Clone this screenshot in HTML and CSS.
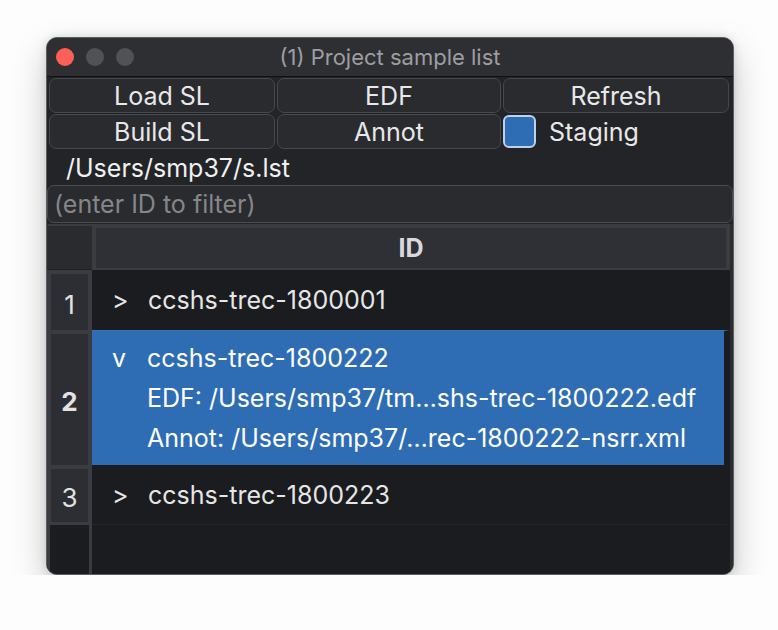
FILE: index.html
```html
<!DOCTYPE html>
<html lang="en">
<head>
  <meta charset="UTF-8">
  <title>(1) Project sample list</title>
  <link rel="stylesheet" href="styles.css">
</head>
<body>

  <div class="window">
    <div class="titlebar">
      <div class="lights">
        <span class="light red"></span>
        <span class="light"></span>
        <span class="light"></span>
      </div>
      <div class="title">(1) Project sample list</div>
    </div>

    <div class="toolbar">
      <button class="btn">Load SL</button>
      <button class="btn">EDF</button>
      <button class="btn">Refresh</button>
      <button class="btn">Build SL</button>
      <button class="btn">Annot</button>
      <label class="check"><span class="box"></span>Staging</label>
    </div>

    <div class="path">/Users/smp37/s.lst</div>
    <input class="filter" type="text" placeholder="(enter ID to filter)">

    <div class="table">
      <div class="thead">
        <div class="corner"></div>
        <div class="colhead"><span>ID</span></div>
      </div>

      <div class="row">
        <div class="num"><span>1</span></div>
        <div class="cell">
          <div class="line"><span class="arrow">&gt;</span>ccshs-trec-1800001</div>
        </div>
      </div>

      <div class="row open">
        <div class="num sel"><span>2</span></div>
        <div class="cell">
          <div class="line"><span class="arrow v">v</span>ccshs-trec-1800222</div>
          <div class="line sub">EDF: /Users/smp37/tm…shs-trec-1800222.edf</div>
          <div class="line sub">Annot: /Users/smp37/…rec-1800222-nsrr.xml</div>
        </div>
      </div>

      <div class="row last">
        <div class="num"><span>3</span></div>
        <div class="cell">
          <div class="line"><span class="arrow">&gt;</span>ccshs-trec-1800223</div>
        </div>
      </div>

      <div class="filler">
        <div class="numfill"></div>
        <div class="cellfill"></div>
      </div>
    </div>
  </div>

</body>
</html>
```

FILE: styles.css
```css
body {
  margin: 0;
  padding: 37px 0 0 46px;
  background-color: #fdfdfd;
  font-family: Inter, "Liberation Sans", sans-serif;
}
.window {
  width: 686px;
  height: 536px;
  border: 1px solid #5d5e62;
  border-radius: 11px;
  background-color: #232427;
  box-shadow: 0 14px 34px rgba(0,0,0,0.22), 0 0 8px rgba(0,0,0,0.12);
  overflow: hidden;
  display: flex;
  flex-direction: column;
}
.titlebar {
  height: 38px;
  flex: none;
  background-color: #2e2f33;
  border-bottom: 1px solid #0f1012;
  display: flex;
  align-items: center;
  position: relative;
}
.lights {
  display: flex;
  gap: 12px;
  padding-left: 9px;
}
.light {
  width: 18px;
  height: 18px;
  border-radius: 50%;
  background-color: #505256;
}
.light.red {
  background-color: #fe5f57;
}
.title {
  position: absolute;
  left: 0;
  right: 0;
  text-align: center;
  color: #9d9ea1;
  font-size: 22px;
  top: 6px;
}
.toolbar {
  flex: none;
  display: grid;
  grid-template-columns: 226px 224px 226px;
  grid-auto-rows: 35px;
  column-gap: 2px;
  row-gap: 1px;
  padding: 1px 0 0 2px;
}
.btn {
  background-color: #2a2b2f;
  border: 1px solid #46484d;
  border-radius: 7px;
  color: #e8e8e8;
  font-family: inherit;
  font-size: 25px;
  padding: 0;
}
.check {
  display: flex;
  align-items: center;
  color: #e8e8e8;
  font-size: 25px;
  gap: 13px;
}
.box {
  width: 29px;
  height: 29px;
  border: 2px solid #bcd1ea;
  border-radius: 6px;
  background-color: #2e6db4;
}
.path {
  flex: none;
  height: 35px;
  line-height: 39px;
  padding-left: 19px;
  color: #f0f0f0;
  font-size: 25px;
}
.filter {
  flex: none;
  height: 38px;
  box-sizing: border-box;
  margin: 1px 0 1px 0;
  border: 1px solid #4a4c51;
  border-radius: 7px;
  background-color: #2a2b2f;
  color: #e8e8e8;
  font-family: inherit;
  font-size: 25px;
  padding: 0 6px;
}
.filter::placeholder {
  color: #85868a;
}
.table {
  flex: 1;
  display: flex;
  flex-direction: column;
  background-color: #2b2c2f;
  padding-right: 3px;
}
.thead {
  display: flex;
  height: 46px;
  flex: none;
}
.corner {
  width: 44px;
  margin-left: 1px;
  background-color: #2a2b2e;
  border-top: 2px solid #3a3c41;
  border-bottom: 1px solid #1e1f22;
}
.colhead {
  flex: 1;
  background-color: #2e3035;
  border: 4px solid #3a3c41;
  border-bottom-width: 2px;
  display: flex;
  align-items: center;
  justify-content: center;
  color: #d9d9db;
  font-weight: bold;
  font-size: 25px;
}
.row {
  display: flex;
  flex: none;
  height: 60px;
}
.row.open {
  height: 135px;
}
.num {
  width: 37px;
  flex: none;
  background-color: #2c2e33;
  border: 4px solid #3a3c41;
  border-bottom: none;
  display: flex;
  align-items: center;
  justify-content: center;
  color: #e2e2e2;
  font-size: 26px;
  padding-top: 4px;
}
.num.sel {
  font-weight: bold;
}
.row.last .num {
  border-bottom: 3px solid #3a3c41;
}
.cell {
  flex: 1;
  background-color: #1b1c1f;
  display: flex;
  flex-direction: column;
  justify-content: center;
  padding-left: 20px;
  color: #e6e6e6;
  font-size: 25px;
  border-right: 6px solid #1b1c1f;
}
.row.open .cell {
  background-color: #2e6db4;
  color: #ffffff;
  border-top: 1px solid #3a74b8;
}
.row.last .cell {
  border-bottom: 1px solid #232427;
}
.line {
  height: 40px;
  line-height: 40px;
  display: flex;
}
.arrow {
  width: 36px;
  flex: none;
}
.arrow.v {
  width: 35px;
}
.sub {
  padding-left: 35px;
}
.filler {
  flex: 1;
  display: flex;
}
.numfill {
  width: 39px;
  flex: none;
  background-color: #1b1c1f;
  border-left: 3px solid #3a3c41;
  border-right: 3px solid #3a3c41;
}
.cellfill {
  flex: 1;
  background-color: #1b1c1f;
}
```
